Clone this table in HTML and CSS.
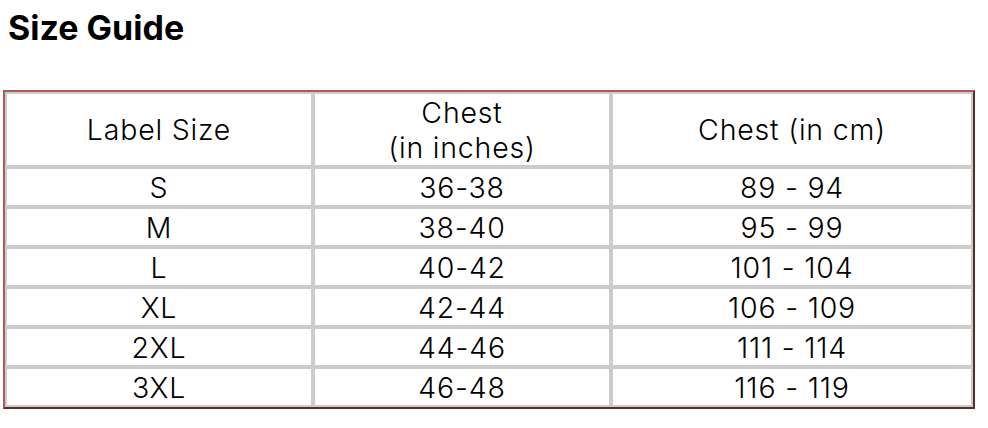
FILE: index.html
```html
<!DOCTYPE html>
<html>
<head>
<meta charset="utf-8">
<link rel="stylesheet" href="styles.css">
</head>
<body>
<h2 class="title">Size Guide</h2>
<table class="guide">
  <colgroup>
    <col class="c1"><col class="c2"><col class="c3">
  </colgroup>
  <thead>
    <tr><th>Label Size</th><th>Chest<br>(in inches)</th><th>Chest (in cm)</th></tr>
  </thead>
  <tbody>
    <tr><td>S</td><td>36-38</td><td>89 - 94</td></tr>
    <tr><td>M</td><td>38-40</td><td>95 - 99</td></tr>
    <tr><td>L</td><td>40-42</td><td>101 - 104</td></tr>
    <tr><td>XL</td><td>42-44</td><td>106 - 109</td></tr>
    <tr><td>2XL</td><td>44-46</td><td>111 - 114</td></tr>
    <tr><td>3XL</td><td>46-48</td><td>116 - 119</td></tr>
  </tbody>
</table>
</body>
</html>
```
FILE: styles.css
```css
html, body {
  margin: 0;
  padding: 0;
  background: #fff;
}
body {
  font-family: "Inter", "Open Sans", sans-serif;
  color: #000;
}
.title {
  margin: 0;
  padding: 10px 0 0 8px;
  height: 90px;
  box-sizing: border-box;
  font-size: 34px;
  line-height: 36px;
  font-weight: 700;
  letter-spacing: 0;
}
.guide {
  margin-left: 3px;
  width: 972px;
  table-layout: fixed;
  border-collapse: separate;
  border-spacing: 0;
  border-style: solid;
  border-width: 2px;
  border-color: #b35858 #5c2c2c #5c2c2c #b35858;
}
.c1 { width: 308px; }
.c2 { width: 298px; }
.c3 { width: 362px; }
.guide th, .guide td {
  border: 2px solid #ccc;
  padding: 0;
  text-align: center;
  vertical-align: middle;
  font-weight: 300;
  font-size: 28.5px;
  line-height: 35px;
  letter-spacing: 0.8px;
  height: 36px;
}
.guide th {
  height: 71px;
}
```
